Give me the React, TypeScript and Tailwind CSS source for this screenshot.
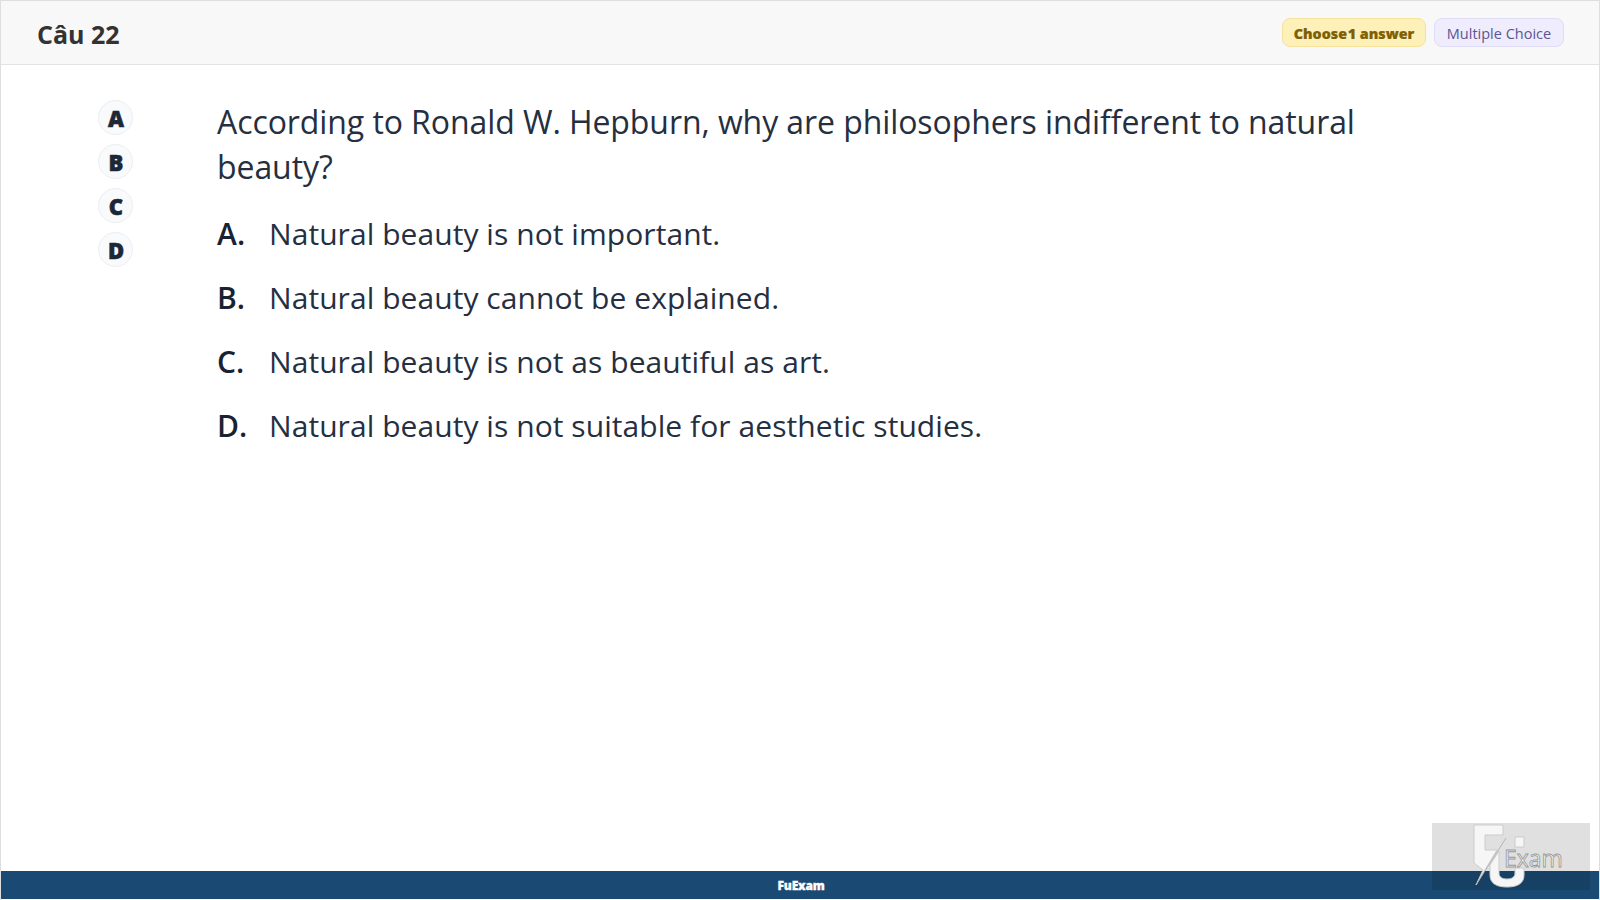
const options = [
  { key: "A", text: "Natural beauty is not important." },
  { key: "B", text: "Natural beauty cannot be explained." },
  { key: "C", text: "Natural beauty is not as beautiful as art." },
  { key: "D", text: "Natural beauty is not suitable for aesthetic studies." },
];

function WatermarkLogo() {
  return (
    <div className="absolute left-[1431px] top-[822px] h-[67px] w-[158px] bg-black/12">
      <svg viewBox="0 0 158 67" className="absolute inset-0 h-full w-full">
        {/* F */}
        <path
          d="M42 2H71V12H53V27H65L44 62L51 47L42 40Z"
          fill="#f6f6f6"
          stroke="#cccccc"
          strokeWidth="1"
        />
        {/* diagonal cut */}
        <path d="M74 15L44 62" stroke="#a8a8a8" strokeWidth="0.8" fill="none" />
        {/* U */}
        <path
          d="M67 28V50C67 54 70 56 75 56C80 56 83 54 83 50V45H92V52C92 60 86 64 75 64C64 64 58 60 58 52V42Z"
          fill="#f6f6f6"
          stroke="#cccccc"
          strokeWidth="1"
        />
        {/* dot of the i */}
        <rect x="83" y="14" width="9" height="10" fill="#f6f6f6" stroke="#cccccc" />
      </svg>
      <span className="absolute left-[72px] top-[20px] font-['Open_Sans',sans-serif] text-[23px] leading-[30px] text-[#f2f2f2] [-webkit-text-stroke:0.8px_#989898]">
        Exam
      </span>
    </div>
  );
}

export default function App() {
  return (
    <div className="relative flex h-[900px] w-[1600px] flex-col overflow-hidden border-x border-t border-[#dedede] bg-white font-['Open_Sans',sans-serif]">
      <header className="flex h-[64px] shrink-0 items-center justify-between border-b border-[#e3e3e3] bg-[#f8f8f8] pl-[36px] pr-[35px]">
        <h1 className="pt-[4px] text-[25px] font-bold text-[#333333]">Câu 22</h1>
        <div className="flex items-center gap-2">
          <span className="flex h-[29px] w-[144px] items-center justify-center rounded-lg border border-[#f6e39a] bg-[#fdf0b8] pt-[2px] text-[14.3px] font-extrabold text-[#7d5f05] [-webkit-text-stroke:0.2px_#7d5f05]">
            <span className="mr-[-3px]">Choose</span>&nbsp;1 answer
          </span>
          <span className="flex h-[29px] w-[130px] items-center justify-center rounded-lg border border-[#dfdcf6] bg-[#eeecfd] pt-[2px] text-[14.5px] text-[#5b5591]">
            Multiple Choice
          </span>
        </div>
      </header>

      <main className="flex flex-1 pt-[35px]">
        <div className="ml-[97px] flex w-[119px] flex-col gap-[9px]">
          {options.map((o) => (
            <div
              key={o.key}
              className="flex h-[35px] w-[35px] items-center justify-center rounded-full border border-[#eceef1] bg-[#f9fafb] pl-[1px] pt-[2px] font-['Noto_Sans',sans-serif] text-[22px] font-black text-[#1c2738] [-webkit-text-stroke:0.6px_#1c2738]"
            >
              {o.key}
            </div>
          ))}
        </div>
        <div className="w-[1170px]">
          <p className="mt-[-1px] text-[32px] leading-[45px] tracking-[-0.08px] text-[#252f3f]">
            According to Ronald W. Hepburn, why are philosophers indifferent to natural beauty?
          </p>
          <div className="mt-[22px] flex flex-col gap-[19px]">
            {options.map((o) => (
              <div key={o.key} className="flex text-[30px] leading-[45px] tracking-[0.06px] text-[#252f3f]">
                <span className="w-[52px] shrink-0 font-semibold text-[#1a2232]">{o.key}.</span>
                <span>{o.text}</span>
              </div>
            ))}
          </div>
        </div>
      </main>

      <footer className="mb-[1px] flex h-[28px] shrink-0 items-center justify-center bg-[#1a4a74] pl-[2px] pt-[1px] font-['Noto_Sans',sans-serif] text-[12px] font-black tracking-[-0.2px] text-white [-webkit-text-stroke:0.3px_#ffffff]">
        FuExam
      </footer>

      <WatermarkLogo />
    </div>
  );
}
